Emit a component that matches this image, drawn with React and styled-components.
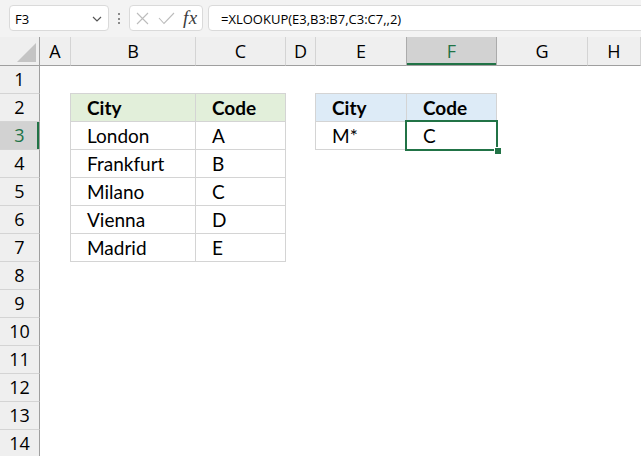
import React from 'react';
import styled, { createGlobalStyle, css } from 'styled-components';

const GlobalStyle = createGlobalStyle`
  html, body {
    margin: 0;
    padding: 0;
    background: #ffffff;
    overflow: hidden;
  }
`;

const GREEN = '#217346';
const LINE = '#d4d4d4';

const COLS = ['A', 'B', 'C', 'D', 'E', 'F', 'G', 'H'];
const ROW_COUNT = 14;

// tables on the sheet: top-left corner, header fill, rows
const tables = [
  {
    row: 2,
    col: 1,
    fill: '#e2efda',
    rows: [
      ['City', 'Code'],
      ['London', 'A'],
      ['Frankfurt', 'B'],
      ['Milano', 'C'],
      ['Vienna', 'D'],
      ['Madrid', 'E'],
    ],
  },
  {
    row: 2,
    col: 4,
    fill: '#ddebf7',
    rows: [
      ['City', 'Code'],
      ['M*', 'C'],
    ],
  },
];

const active = { row: 3, col: 5 };

function cellInfo(r, c) {
  for (const t of tables) {
    const dr = r - t.row;
    const dc = c - t.col;
    if (dr >= 0 && dr < t.rows.length && dc >= 0 && dc < t.rows[0].length) {
      return {
        text: t.rows[dr][dc],
        header: dr === 0,
        fill: dr === 0 ? t.fill : null,
        top: dr === 0,
        left: dc === 0,
        boxed: true,
      };
    }
  }
  return { text: '', boxed: false };
}

const Page = styled.div`
  width: 641px;
  height: 456px;
  overflow: hidden;
  background: #ffffff;
`;

const TopBar = styled.div`
  display: flex;
  align-items: flex-start;
  height: 37px;
  box-sizing: border-box;
  padding: 5px 0 0 9px;
  background: #f3f3f3;
  font-family: "Open Sans", sans-serif;
  font-size: 13px;
`;

const NameBox = styled.div`
  display: flex;
  align-items: center;
  justify-content: space-between;
  width: 100px;
  height: 26px;
  box-sizing: border-box;
  padding: 1px 6px 0 5px;
  background: #ffffff;
  border: 1px solid #dadada;
  border-radius: 4px;
  color: #000;
`;

const Dots = styled.div`
  display: flex;
  flex-direction: column;
  gap: 2.5px;
  margin: 8px 9px 0 9px;
  span {
    width: 2px;
    height: 2px;
    background: #8a8a8a;
  }
`;

const FxBox = styled.div`
  display: flex;
  align-items: center;
  gap: 9px;
  width: 74px;
  height: 26px;
  box-sizing: border-box;
  padding-left: 6px;
  background: #ffffff;
  border: 1px solid #dadada;
  border-radius: 4px;
`;

const FxLabel = styled.span`
  font-family: "Liberation Serif", serif;
  font-style: italic;
  font-size: 19px;
  color: #3c3c3c;
  margin-left: -1px;
  letter-spacing: 0.5px;
`;

const FormulaInput = styled.div`
  flex: 1;
  height: 26px;
  box-sizing: border-box;
  margin: 0 -10px 0 5px;
  padding: 1px 0 0 12px;
  line-height: 24px;
  background: #ffffff;
  border: 1px solid #dadada;
  border-radius: 4px;
  color: #000;
  white-space: nowrap;
`;

const Sheet = styled.div`
  display: grid;
  grid-template-columns: 40px 31px 125px 90px 30px 91px 90px 91px 1fr;
  grid-template-rows: 29px repeat(${ROW_COUNT}, 28px);
`;

const Corner = styled.div`
  background: #efefef;
  border-right: 1px solid #9f9f9f;
  border-bottom: 1px solid #9f9f9f;
  display: flex;
  align-items: flex-end;
  justify-content: flex-end;
  padding: 0 3px 3px 0;
`;

const ColHead = styled.div`
  background: #efefef;
  border-right: 1px solid ${LINE};
  border-bottom: 1px solid #9f9f9f;
  font-family: "Open Sans", sans-serif;
  font-size: 18px;
  line-height: 28px;
  text-align: center;
  color: #000;
  ${p => p.$active && css`
    background: #d2d2d2;
    color: ${GREEN};
    border-right-color: #ababab;
    box-shadow: inset 0 -2px 0 ${GREEN}, -1px 0 0 #ababab;
  `}
`;

const RowHead = styled.div`
  background: #efefef;
  border-right: 1px solid #9f9f9f;
  border-bottom: 1px solid ${LINE};
  font-family: "Open Sans", sans-serif;
  font-size: 18px;
  line-height: 27px;
  text-align: center;
  color: #000;
  ${p => p.$active && css`
    background: #d2d2d2;
    color: ${GREEN};
    box-shadow: inset -2px 0 0 ${GREEN};
  `}
`;

const Cell = styled.div`
  padding-left: 16px;
  font-family: Lato, "Open Sans", sans-serif;
  font-size: 19px;
  font-weight: ${p => (p.$bold ? 700 : 400)};
  line-height: 27px;
  color: #000;
  white-space: nowrap;
  background: ${p => p.$fill || '#ffffff'};
  ${p => p.$boxed && css`
    box-shadow: ${[
      `inset -1px -1px 0 ${LINE}`,
      p.$top && `0 -1px 0 ${LINE}`,
      p.$left && `-1px 0 0 ${LINE}`,
      p.$top && p.$left && `-1px -1px 0 ${LINE}`,
    ].filter(Boolean).join(', ')};
  `}
  ${p => p.$selected && css`
    position: relative;
  `}
`;

const Selection = styled.div`
  position: absolute;
  top: -2px;
  left: -2px;
  right: -1px;
  bottom: -1px;
  border: 2px solid ${GREEN};
  pointer-events: none;
`;

const FillHandle = styled.div`
  position: absolute;
  right: -4px;
  bottom: -4px;
  width: 6px;
  height: 6px;
  background: ${GREEN};
  box-shadow: 0 0 0 1px #ffffff;
`;

function Chevron() {
  return (
    <svg width="10" height="6" viewBox="0 0 10 6">
      <path d="M1 1 L5 5 L9 1" fill="none" stroke="#555" strokeWidth="1.2" />
    </svg>
  );
}

function CancelIcon() {
  return (
    <svg width="13" height="13" viewBox="0 0 13 13">
      <path d="M1 1 L12 12 M12 1 L1 12" stroke="#bcbcbc" strokeWidth="1.1" fill="none" />
    </svg>
  );
}

function EnterIcon() {
  return (
    <svg width="17" height="13" viewBox="0 0 17 13">
      <path d="M1 6 L6 11.5 L16 1" stroke="#bcbcbc" strokeWidth="1.1" fill="none" />
    </svg>
  );
}

function SelectAll() {
  return (
    <svg width="19" height="19" viewBox="0 0 19 19">
      <polygon points="19,0 19,19 0,19" fill="#c4c4c4" />
    </svg>
  );
}

export default function App() {
  const rows = [];
  for (let r = 1; r <= ROW_COUNT; r++) {
    rows.push(
      <RowHead key={`h${r}`} $active={r === active.row}>{r}</RowHead>
    );
    COLS.forEach((_, c) => {
      const info = cellInfo(r, c);
      const selected = r === active.row && c === active.col;
      rows.push(
        <Cell
          key={`${r}-${c}`}
          $bold={info.header}
          $fill={info.fill}
          $boxed={info.boxed}
          $top={info.top}
          $left={info.left}
          $selected={selected}
        >
          {info.text}
          {selected && (
            <>
              <Selection />
              <FillHandle />
            </>
          )}
        </Cell>
      );
    });
  }

  return (
    <Page>
      <GlobalStyle />
      <TopBar>
        <NameBox>
          <span>F3</span>
          <Chevron />
        </NameBox>
        <Dots>
          <span />
          <span />
          <span />
        </Dots>
        <FxBox>
          <CancelIcon />
          <EnterIcon />
          <FxLabel>fx</FxLabel>
        </FxBox>
        <FormulaInput>=XLOOKUP(E3,B3:B7,C3:C7,,2)</FormulaInput>
      </TopBar>
      <Sheet>
        <Corner>
          <SelectAll />
        </Corner>
        {COLS.map((col, c) => (
          <ColHead key={col} $active={c === active.col}>{col}</ColHead>
        ))}
        {rows}
      </Sheet>
    </Page>
  );
}
